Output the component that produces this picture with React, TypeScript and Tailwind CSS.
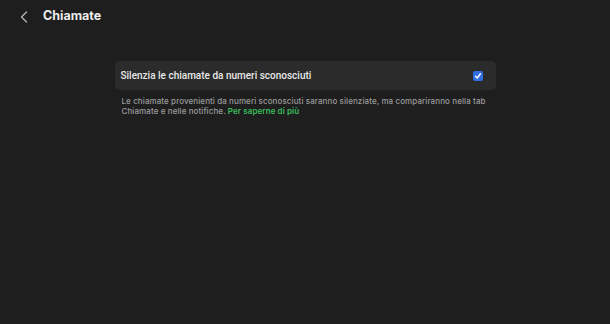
export default function App() {
  return (
    <div className="min-h-screen w-full bg-[#1e1e1e] font-['Inter','Liberation_Sans',sans-serif]">
      {/* header */}
      <div className="flex h-[33px] items-center">
        <button className="ml-[19px] flex h-[14px] w-[10px] items-center justify-center text-[#b4b4b4]">
          <svg width="8" height="12" viewBox="0 0 8 12" fill="none">
            <path d="M6.5 1 L1.5 6 L6.5 11" stroke="currentColor" strokeWidth="1.4" strokeLinecap="round" strokeLinejoin="round" />
          </svg>
        </button>
        <h1 className="ml-[14px] text-[12.5px] font-bold text-[#ececec]">Chiamate</h1>
      </div>

      <div className="mx-auto mt-[28px] w-[381px]">
        <div className="flex h-[29px] items-center justify-between rounded-[5px] bg-[#2b2b2b] pl-[6px] pr-[13px]">
          <span className="font-['Roboto',sans-serif] text-[10px] font-medium text-[#e8e8e8]">
            Silenzia le chiamate da numeri sconosciuti
          </span>
          <span className="flex h-[10px] w-[10px] items-center justify-center rounded-[2px] bg-[#2e6ee0]">
            <svg width="8" height="8" viewBox="0 0 8 8" fill="none">
              <path d="M1.5 4.2 L3.2 6 L6.5 1.8" stroke="white" strokeWidth="1.4" strokeLinecap="round" strokeLinejoin="round" />
            </svg>
          </span>
        </div>
        <p className="mt-[6px] whitespace-nowrap px-[7px] text-[8px] font-medium leading-[10px] tracking-[0.012em] text-[#9b9b9b]">
          Le chiamate provenienti da numeri sconosciuti saranno silenziate, ma compariranno nella tab
          <br />
          Chiamate e nelle notifiche.{' '}
          <span className="font-semibold text-[#3bbf5c]">Per saperne di più</span>
        </p>
      </div>
    </div>
  );
}
